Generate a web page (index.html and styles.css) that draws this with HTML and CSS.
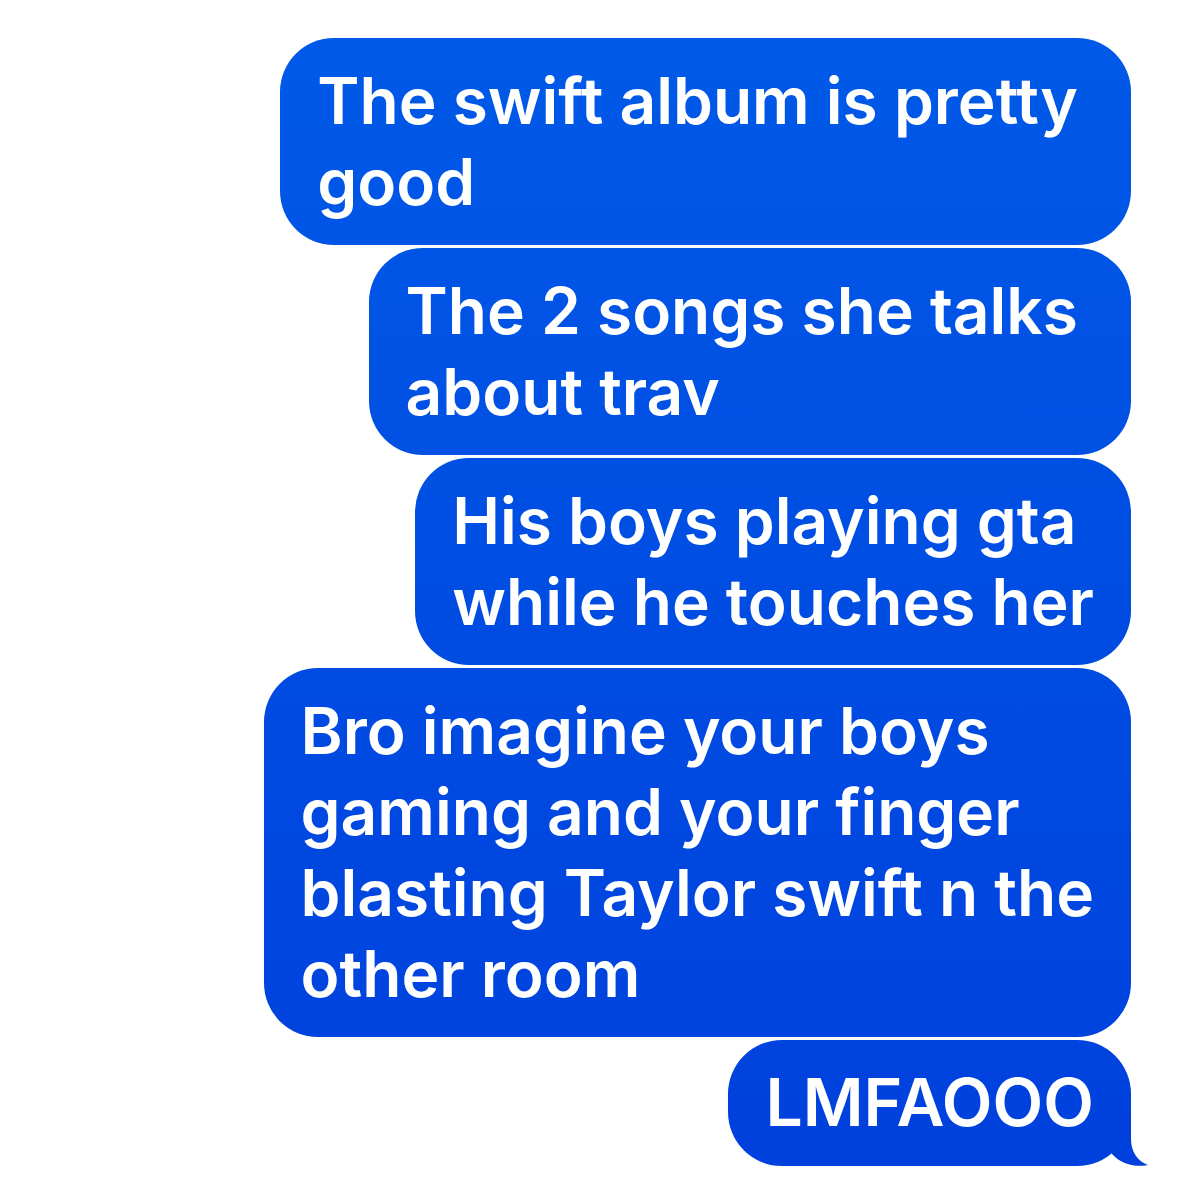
FILE: index.html
```
<!DOCTYPE html>
<html lang="en">
<head>
    <meta charset="UTF-8">
    <meta name="viewport" content="width=device-width, initial-scale=1.0">
    <title>Messages</title>
    <link rel="stylesheet" href="styles.css">
</head>
<body>

    <main class="chat">
        <p class="bubble">The swift album is pretty&nbsp;<br>good</p>
        <p class="bubble">The 2 songs she talks&nbsp;<br>about trav</p>
        <p class="bubble">His boys playing gta<br>while he touches her</p>
        <p class="bubble">Bro imagine your boys<br>gaming and your finger<br>blasting Taylor swift n the<br>other room</p>
        <p class="bubble caps">LMFAOOO
            <svg class="tail" viewBox="0 0 36 60" aria-hidden="true">
                <path d="M0 0H19V33C19 45 25 55 36 59C22 62 8 57 0 48Z" fill="#0041de"/>
            </svg>
        </p>
    </main>

</body>
</html>
```
FILE: styles.css
```
body {
    margin: 0;
    background: #fff;
    font-family: Inter, "Liberation Sans", sans-serif;
}
.chat {
    display: flex;
    flex-direction: column;
    align-items: flex-end;
    gap: 3px;
    padding: 38px 48px 16px;
}
.bubble {
    position: relative;
    margin: 0;
    padding: 22px 37px 23px;
    border-radius: 54px;
    background: linear-gradient(#005ae8, #0040dd) fixed;
    color: #fff;
    font-size: 64px;
    font-weight: 600;
    line-height: 81px;
    font-variant-ligatures: none;
}
.caps {
    font-size: 66px;
}
/* curl at the corner of the last message */
.tail {
    position: absolute;
    right: -17px;
    bottom: 0;
    width: 36px;
    height: 60px;
}
```
